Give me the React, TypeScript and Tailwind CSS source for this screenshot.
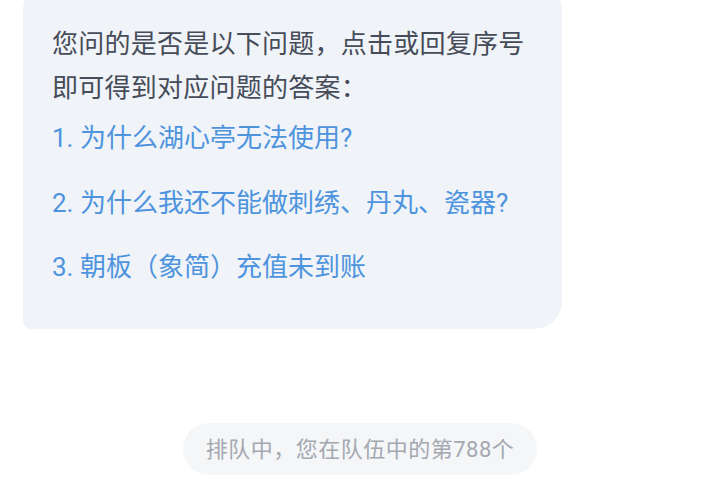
import React from "react";

const questions = [
  "1. 为什么湖心亭无法使用?",
  "2. 为什么我还不能做刺绣、丹丸、瓷器?",
  "3. 朝板（象简）充值未到账",
];

export default function App() {
  return (
    <div
      className="w-[720px] h-[493px] bg-white overflow-hidden flex flex-col"
      style={{ fontFamily: '"Roboto", "Noto Sans CJK SC", sans-serif' }}
    >
      <div className="mt-[-18px] ml-[23px] w-[539px] bg-[#f0f3f7] rounded-tl-[28px] rounded-tr-[28px] rounded-br-[28px] rounded-bl-[8px] pt-[40px] pb-[40px] px-[29px]">
        <p className="text-[26px] leading-[44px] tracking-[0.25px] text-[#464c59]">
          您问的是否是以下问题，点击或回复序号
          <br />
          即可得到对应问题的答案：
        </p>
        <div className="flex flex-col gap-[20.5px] mt-[6px]">
          {questions.map((q) => (
            <div key={q} className="text-[26px] leading-[44px] text-[#4d93de] whitespace-nowrap">
              {q}
            </div>
          ))}
        </div>
      </div>
      <div className="flex justify-center mt-[94px]">
        <div className="h-[52px] px-[23px] rounded-full bg-[#f5f6f8] flex items-center text-[22px] tracking-[0.5px] text-[#a4a8b1] whitespace-nowrap">
          排队中，您在队伍中的第788个
        </div>
      </div>
    </div>
  );
}
